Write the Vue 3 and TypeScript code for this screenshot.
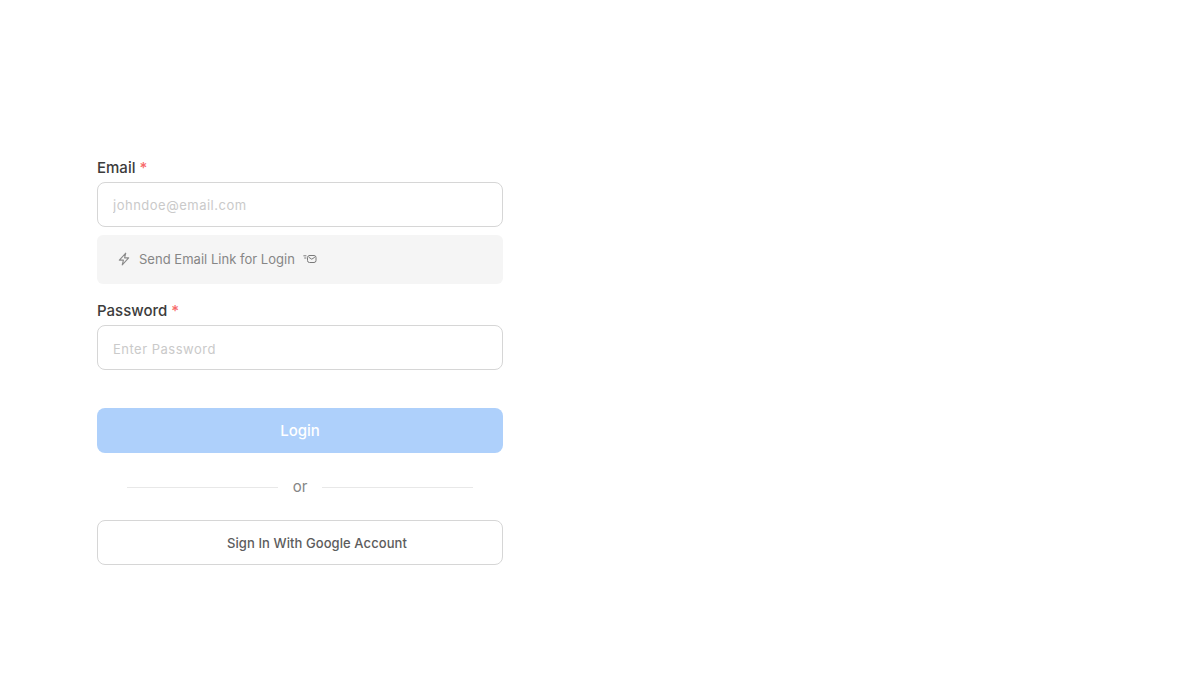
<script setup lang="ts">
const title = 'Login'
</script>

<template>
  <main class="page">
    <form class="form" @submit.prevent>
      <div class="field">
        <label class="label" for="email">Email <span class="req">*</span></label>
        <input id="email" class="input" type="email" placeholder="johndoe@email.com" />
      </div>
      <button type="button" class="magic">
        <svg class="bolt" width="14" height="14" viewBox="0 0 24 24" fill="none" stroke="#8a8a8a" stroke-width="1.9" stroke-linejoin="round" stroke-linecap="round">
          <path d="M15 2 4 14h7l-2 8 11-12h-7l2-8Z" />
        </svg>
        <span>Send Email Link for Login</span>
        <svg class="mail" width="14" height="12" viewBox="0 0 14 12" fill="none" stroke="#7a7a7a" stroke-width="1" stroke-linejoin="round" stroke-linecap="round">
          <rect x="4.5" y="2.5" width="8.5" height="7" rx="2" />
          <path d="m6 4.4 2.75 1.8 2.75-1.8" />
          <path d="M0.8 2.8h2.2M1.6 5h1.4" />
        </svg>
      </button>
      <div class="field password">
        <label class="label" for="password">Password <span class="req">*</span></label>
        <input id="password" class="input shifted" type="password" placeholder="Enter Password" />
      </div>
      <button type="submit" class="login" disabled>{{ title }}</button>
      <div class="divider"><span class="line"></span><span class="or">or</span><span class="line"></span></div>
      <button type="button" class="google"><span>Sign In With Google Account</span></button>
    </form>
  </main>
</template>

<style>
html, body { margin: 0; background: #fff; }
</style>

<style scoped>
.page {
  height: 675px;
  box-sizing: border-box;
  padding: 155px 0 0 97px;
  font-family: Inter, "Liberation Sans", sans-serif;
}
.form { width: 406px; display: flex; flex-direction: column; }
.field { display: flex; flex-direction: column; gap: 2px; }
.label { font-size: 15px; line-height: 25px; font-weight: 500; color: #3c3c3c; }
.req { color: #f76a6a; }
.input {
  box-sizing: border-box;
  height: 45px;
  width: 100%;
  padding: 0 15px;
  border: 1px solid #d6d6d6;
  border-radius: 8px;
  outline: none;
  background: #fff;
  font: 400 13px Inter, "Liberation Sans", sans-serif;
  letter-spacing: 0.5px;
}
.shifted { padding-top: 2px; }
.input::placeholder { color: #cacaca; opacity: 1; }
.magic {
  box-sizing: border-box;
  margin-top: 8px;
  height: 49px;
  border: 0;
  border-radius: 6px;
  background: #f5f5f5;
  padding: 0 0 1px 20px;
  display: flex;
  align-items: center;
  font: 400 13px Inter, "Liberation Sans", sans-serif;
  letter-spacing: 0.02px;
  color: #868686;
  text-align: left;
}
.bolt { margin-right: 8px; }
.mail { margin-left: 8px; }
.password { margin-top: 14px; }
.login {
  margin-top: 38px;
  height: 45px;
  border: 0;
  border-radius: 8px;
  background: #aed0fb;
  color: #fff;
  font: 500 15px Inter, "Liberation Sans", sans-serif;
}
.divider {
  margin: 25px 30px 0;
  height: 18px;
  display: flex;
  align-items: center;
  gap: 15px;
}
.line { flex: 1; height: 1px; background: #e8e8e8; }
.or { font-size: 15px; line-height: 18px; color: #868686; }
.google {
  margin-top: 24px;
  box-sizing: border-box;
  height: 45px;
  border: 1px solid #d6d6d6;
  border-radius: 8px;
  background: #fff;
  padding: 0 0 0 34px;
  color: #5c5c5c;
  font: 500 13px Inter, "Liberation Sans", sans-serif;
  letter-spacing: 0.08px;
}
</style>
